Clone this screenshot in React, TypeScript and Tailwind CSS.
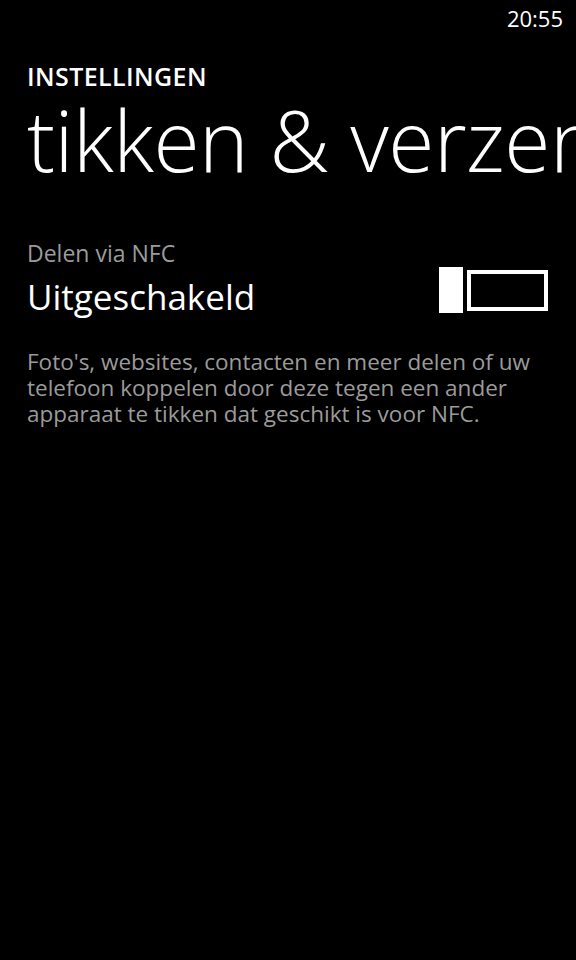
export default function App() {
  return (
    <div className="h-[960px] w-[576px] overflow-hidden bg-black text-white font-['Open_Sans',sans-serif]">
      {/* status bar */}
      <div className="flex h-[38px] justify-end pr-[13px] pt-[4px]">
        <span className="text-[22px] leading-[28px]">20:55</span>
      </div>

      <div className="pl-[27px]">
        <h2 className="mt-[22px] text-[25px] font-semibold leading-[32px] tracking-[0.4px]">INSTELLINGEN</h2>
        <h1 className="mt-[6px] whitespace-nowrap text-[84px] font-light leading-[84px] tracking-[-0.5px]">
          tikken &amp; verzenden
        </h1>

        <div className="mt-[57px] pr-[28px]">
          <div className="text-[23px] leading-[28px] text-[#9b9b9b]">Delen via NFC</div>
          <div className="mt-[5px] flex items-center justify-between">
            <span className="text-[35px] leading-[50px]">Uitgeschakeld</span>
            <div className="-mt-[14px] flex items-center gap-[4px]">
              <div className="h-[46px] w-[24px] bg-white" />
              <div className="h-[41px] w-[81px] border-[4px] border-white" />
            </div>
          </div>
        </div>

        <p className="mt-[27px] pr-[20px] text-[22.5px] leading-[26px] text-[#9b9b9b]">
          Foto's, websites, contacten en meer delen of uw telefoon koppelen door deze tegen een ander apparaat te tikken dat geschikt is voor NFC.
        </p>
      </div>
    </div>
  );
}
